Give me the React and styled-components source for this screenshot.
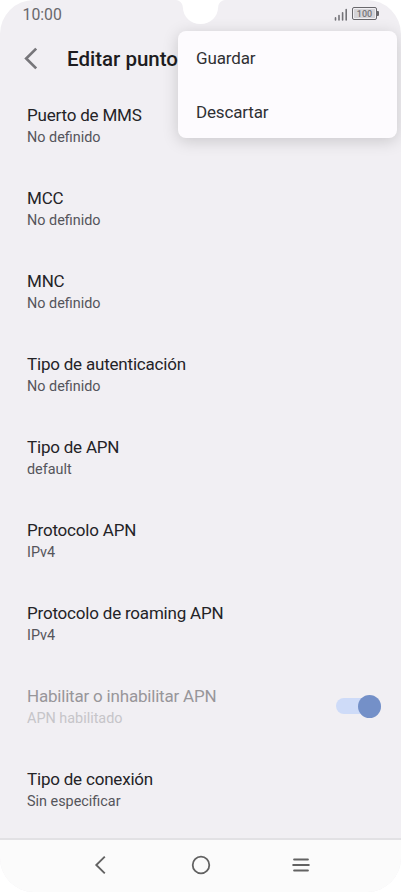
import React from "react";
import styled, { createGlobalStyle } from "styled-components";

const settings = [
  { title: "Puerto de MMS", value: "No definido" },
  { title: "MCC", value: "No definido" },
  { title: "MNC", value: "No definido" },
  { title: "Tipo de autenticación", value: "No definido" },
  { title: "Tipo de APN", value: "default" },
  { title: "Protocolo APN", value: "IPv4" },
  { title: "Protocolo de roaming APN", value: "IPv4" },
  {
    title: "Habilitar o inhabilitar APN",
    value: "APN habilitado",
    disabled: true,
    toggle: true,
  },
  { title: "Tipo de conexión", value: "Sin especificar" },
];

const App = () => {
  return (
    <>
      <GlobalStyle />
      <Phone>
        <StatusBar>
          <Clock>10:00</Clock>
          <StatusIcons>
            <SignalIcon />
            <Battery>
              <BatteryLevel>100</BatteryLevel>
            </Battery>
          </StatusIcons>
        </StatusBar>
        <Header>
          <BackButton aria-label="Atrás">
            <svg width="14" height="24" viewBox="0 0 14 24" fill="none">
              <path d="M12.2 1.6L2.2 11.5L12.2 21.4" stroke="#77767a" strokeWidth="2.7" />
            </svg>
          </BackButton>
          <PageTitle>Editar punto</PageTitle>
        </Header>
        <SettingList>
          {settings.map((item) => (
            <SettingRow key={item.title}>
              <div>
                <SettingTitle $disabled={item.disabled}>{item.title}</SettingTitle>
                <SettingValue $disabled={item.disabled}>{item.value}</SettingValue>
              </div>
              {item.toggle && (
                <Switch>
                  <Thumb />
                </Switch>
              )}
            </SettingRow>
          ))}
        </SettingList>
        <NavBar>
          <NavButton aria-label="Atrás">
            <svg width="24" height="24" viewBox="0 0 24 24" fill="none">
              <path d="M15.8 3.6L7.3 12L15.8 20.4" stroke="#626262" strokeWidth="1.9" />
            </svg>
          </NavButton>
          <NavButton aria-label="Inicio">
            <svg width="24" height="24" viewBox="0 0 24 24" fill="none">
              <circle cx="12" cy="12" r="8.3" stroke="#626262" strokeWidth="1.8" />
            </svg>
          </NavButton>
          <NavButton aria-label="Recientes">
            <svg width="24" height="24" viewBox="0 0 24 24" fill="none">
              <path
                d="M5.1 6.4H18.9M4.2 12H19.8M5.1 17.6H18.9"
                stroke="#626262"
                strokeWidth="2"
                strokeLinecap="round"
              />
            </svg>
          </NavButton>
        </NavBar>
        <Menu>
          <MenuItem>Guardar</MenuItem>
          <MenuItem>Descartar</MenuItem>
        </Menu>
        <Notch width="60" height="24" viewBox="0 0 60 24">
          <path
            d="M6 0C10 .6 12.4 3 12.8 7C13.2 17 20.5 24 30.5 24C40.5 24 47.8 17 48.2 7C48.6 3 51 .6 55 0Z"
            fill="#fff"
          />
        </Notch>
      </Phone>
    </>
  );
};

const SignalIcon = () => (
  <svg width="14" height="14" viewBox="0 0 14 14">
    <path
      d="M1.5 10.9V12.9M5 8.5V12.9M8.6 5.7V12.9M12.2 2.5V12.9"
      stroke="#747378"
      strokeWidth="1.6"
      strokeLinecap="round"
    />
  </svg>
);

export default App;

const GlobalStyle = createGlobalStyle`
  * {
    box-sizing: border-box;
  }

  body {
    margin: 0;
    background: #fff;
    font-family: Roboto, "Liberation Sans", sans-serif;
  }
`;

const Phone = styled.main`
  display: flex;
  flex-direction: column;
  position: relative;
  width: 401px;
  height: 892px;
  overflow: hidden;
  border-radius: 34px;
  background: #f1eff3;
`;

const StatusBar = styled.div`
  display: flex;
  justify-content: space-between;
  align-items: center;
  height: 28px;
  padding: 0 22px 0 22.5px;
`;

const Clock = styled.span`
  padding-top: 2px;
  font-size: 15.8px;
  line-height: 28px;
  color: #69686c;
`;

const StatusIcons = styled.div`
  display: flex;
  align-items: center;
  gap: 4px;
`;

const Battery = styled.div`
  position: relative;
  width: 25px;
  height: 13px;
  margin: 0 2px 1px 0;
  padding: 1px;
  border: 1px solid #69686c;
  border-radius: 2px;

  &::after {
    content: "";
    position: absolute;
    top: 3px;
    right: -3px;
    width: 2px;
    height: 5px;
    border-radius: 0 1px 1px 0;
    background: #69686c;
  }
`;

const BatteryLevel = styled.div`
  height: 9px;
  background: #d5d4d8;
  font-size: 9px;
  font-weight: 500;
  line-height: 10px;
  text-align: center;
  color: #77767a;
`;

const Header = styled.header`
  display: flex;
  align-items: center;
  height: 60px;
  padding: 2px 0 0 24px;
`;

const BackButton = styled.button`
  display: flex;
  width: 43px;
  padding: 0;
  border: 0;
  background: none;
`;

const PageTitle = styled.h1`
  margin: 0;
  font-size: 20.5px;
  font-weight: 500;
  line-height: 28px;
  white-space: nowrap;
  color: #1d1c20;
`;

const SettingList = styled.div`
  flex: 1;
  min-height: 0;
  overflow: hidden;
`;

const SettingRow = styled.div`
  display: flex;
  justify-content: space-between;
  align-items: center;
  height: 83px;
  padding: 0 20px 7px 27px;
`;

const SettingTitle = styled.div`
  font-size: 17px;
  line-height: 22px;
  letter-spacing: -0.2px;
  color: ${({ $disabled }) => ($disabled ? "#98969a" : "#242327")};
`;

const SettingValue = styled.div`
  margin-top: 2px;
  font-size: 14.4px;
  line-height: 20px;
  color: ${({ $disabled }) => ($disabled ? "#c6c5c9" : "#55555b")};
`;

const Switch = styled.div`
  display: flex;
  justify-content: flex-end;
  align-items: center;
  width: 45px;
  height: 16px;
  margin-bottom: 2px;
  border-radius: 8px;
  background: #cedbf8;
`;

const Thumb = styled.div`
  width: 23px;
  height: 23px;
  flex-shrink: 0;
  border-radius: 50%;
  background: #7490c8;
`;

const NavBar = styled.nav`
  display: flex;
  justify-content: center;
  align-items: center;
  height: 54px;
  padding-bottom: 2px;
  border-top: 2px solid #e2e1e4;
  background: #fbfbfb;
`;

const NavButton = styled.button`
  display: flex;
  justify-content: center;
  width: 100px;
  padding: 0;
  border: 0;
  background: none;
`;

const Menu = styled.div`
  position: absolute;
  top: 31px;
  left: 178px;
  width: 219px;
  height: 107px;
  border-radius: 8px;
  background: #fdfbfe;
  box-shadow: 0 3px 16px rgba(0, 0, 0, 0.17);
`;

const MenuItem = styled.div`
  height: 54px;
  padding-left: 18px;
  font-size: 17px;
  line-height: 55px;
  letter-spacing: -0.15px;
  color: #303034;
`;

const Notch = styled.svg`
  position: absolute;
  top: 0;
  left: 170px;
`;
